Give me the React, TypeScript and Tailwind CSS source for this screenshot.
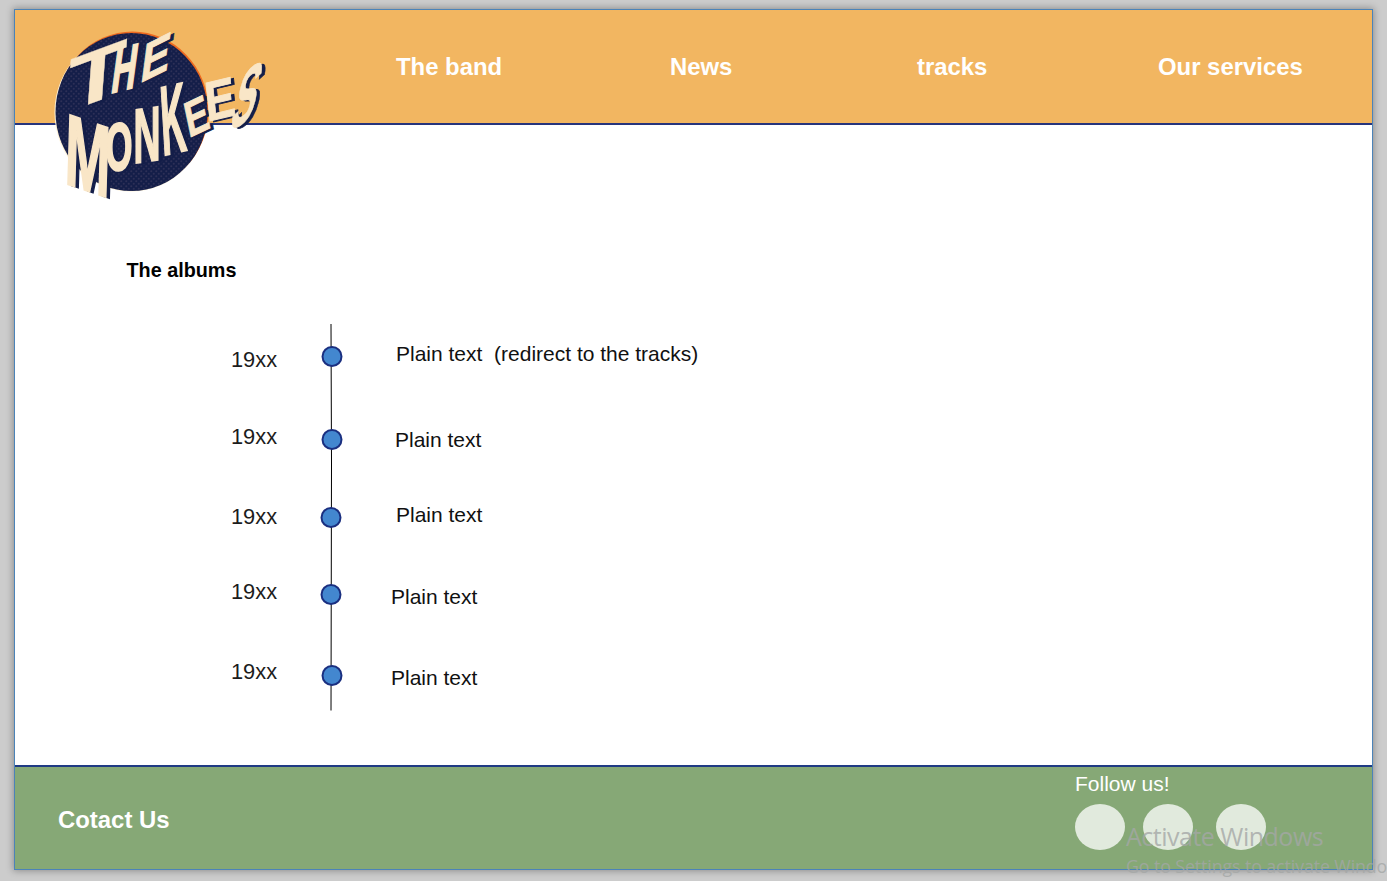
type Point = [number, number];

interface LogoLetter {
  char: string;
  ink: [number, number];
  bl: Point;
  br: Point;
  tl: Point;
  weight: number;
}

// Ink extents are measured at a font size of 100 with a cap height of 68.8.
const LETTERS: LogoLetter[] = [
  { char: 'T', ink: [2.1, 59], bl: [68, 112], br: [122, 92], tl: [72, 59], weight: 0.4 },
  { char: 'H', ink: [6.7, 65.5], bl: [112, 93], br: [132, 88], tl: [118, 49], weight: 1.6 },
  { char: 'E', ink: [6.7, 62.7], bl: [142, 82], br: [166, 70], tl: [147, 44], weight: 1 },
  { char: 'M', ink: [6.7, 76.6], bl: [68, 184], br: [106, 197], tl: [70, 115], weight: 1.8 },
  { char: 'O', ink: [4.1, 73.6], bl: [107, 171], br: [131, 169], tl: [107, 125], weight: 2 },
  { char: 'N', ink: [6.7, 65.5], bl: [136, 163], br: [158, 160], tl: [136, 110], weight: 1.6 },
  { char: 'K', ink: [6.7, 71], bl: [165, 155], br: [187, 150], tl: [161, 88], weight: 1.8 },
  { char: 'E', ink: [6.7, 62.7], bl: [191, 137], br: [210, 128], tl: [184, 104], weight: 0.8 },
  { char: 'E', ink: [6.7, 62.7], bl: [210, 121], br: [235, 115], tl: [206, 83], weight: 0.8 },
  { char: 'S', ink: [3, 62.6], bl: [229, 132], br: [251, 118], tl: [243, 73], weight: 0.8 },
];

function place({ ink, bl, br, tl }: LogoLetter) {
  const w = ink[1] - ink[0];
  const a = (br[0] - bl[0]) / w;
  const b = (br[1] - bl[1]) / w;
  const c = (bl[0] - tl[0]) / 68.8;
  const d = (bl[1] - tl[1]) / 68.8;
  return `matrix(${a} ${b} ${c} ${d} ${bl[0] - a * ink[0]} ${bl[1] - b * ink[0]})`;
}

function Lettering({ color }: { color: string }) {
  return (
    <g
      fill={color}
      stroke={color}
      fontFamily="'Liberation Sans', Arial, sans-serif"
      fontWeight="700"
      fontSize="100"
    >
      {LETTERS.map((letter, i) => (
        <text
          key={i}
          transform={place(letter)}
          strokeWidth={letter.weight}
          vectorEffect="non-scaling-stroke"
        >
          {letter.char}
        </text>
      ))}
    </g>
  );
}

function Logo() {
  return (
    <svg
      className="absolute left-[35px] top-[10px] overflow-visible"
      width="225"
      height="190"
      viewBox="50 20 225 190"
      role="img"
      aria-label="The Monkees"
    >
      <defs>
        <pattern id="halftone" width="5" height="5" patternUnits="userSpaceOnUse">
          <rect width="5" height="5" fill="#141e49" />
          <circle cx="1.25" cy="1.25" r="1" fill="#2d3057" />
          <circle cx="3.75" cy="3.75" r="1" fill="#2d3057" />
        </pattern>
      </defs>
      <ellipse cx="131" cy="112.5" rx="76.5" ry="79" fill="#fff3d8" />
      <ellipse cx="132.5" cy="110.5" rx="76" ry="79" fill="#ed691f" />
      <ellipse cx="131.5" cy="112" rx="76" ry="79" fill="url(#halftone)" />
      <g transform="translate(3.5 1)">
        <Lettering color="#141e49" />
      </g>
      <Lettering color="#f9e6c7" />
    </svg>
  );
}

const YEARS = ['mt-0', 'mt-[53px]', 'mt-[56px]', 'mt-[51px]', 'mt-[56px]'];

const ALBUMS = [
  { text: 'Plain text  (redirect to the tracks)', space: 'ml-[5px]' },
  { text: 'Plain text', space: 'mt-[62px] ml-1' },
  { text: 'Plain text', space: 'mt-[51px] ml-[5px]' },
  { text: 'Plain text', space: 'mt-[58px]' },
  { text: 'Plain text', space: 'mt-[57px]' },
];

const DOTS: Point[] = [
  [12, 32.5],
  [12, 115.5],
  [11, 193.5],
  [11, 270.5],
  [12, 351.5],
];

function Timeline() {
  return (
    <div className="flex items-start">
      <ul className="ml-[216px] w-[89px] pt-6 text-[21.8px] leading-6 text-[#1c1c1c]">
        {YEARS.map((space, i) => (
          <li key={i} className={space}>19xx</li>
        ))}
      </ul>
      <svg width="24" height="387" viewBox="0 0 24 387" className="shrink-0">
        <path d="M11 0 11.5 140 11 386.5" fill="none" stroke="#000" strokeWidth="1" />
        {DOTS.map(([x, y]) => (
          <circle key={y} cx={x} cy={y} r="9.5" fill="#4387cf" stroke="#1a2f80" strokeWidth="2" />
        ))}
      </svg>
      <ul className="ml-[47px] whitespace-pre pt-[18px] text-[21px] leading-6 text-[#111]">
        {ALBUMS.map(({ text, space }, i) => (
          <li key={i} className={space}>{text}</li>
        ))}
      </ul>
    </div>
  );
}

export default function App() {
  return (
    <div className="relative h-[881px] w-[1387px] overflow-hidden bg-[#cccccc] pl-3.5 pt-[9px] font-['Liberation_Sans',Arial,sans-serif]">
      <div className="relative flex h-[861px] w-[1359px] flex-col border border-[#4b83b8] bg-white shadow-[0_0_7px_1px_rgba(0,0,0,0.3)]">
        <header className="h-[115px] shrink-0 bg-[#f2b661]">
          <nav className="flex h-full border-b-2 border-[#27347c] pl-[381px] pt-[43px] text-[23.9px] font-bold leading-7 text-white">
            <a className="w-[274px]">The band</a>
            <a className="w-[247px]">News</a>
            <a className="w-[241px]">tracks</a>
            <a>Our services</a>
          </nav>
        </header>
        <Logo />
        <main className="flex-1">
          <h1 className="mb-[42px] ml-[111.5px] mt-[133px] text-[19.8px] font-bold leading-6 text-black">The albums</h1>
          <Timeline />
        </main>
        <footer className="flex h-[104px] shrink-0 border-t-2 border-[#1f3a84] bg-[#86a876] text-white">
          <div className="w-[1060px] pl-[43px] pt-[39px] text-[23.9px] font-bold leading-7">Cotact Us</div>
          <div className="pt-[5px]">
            <div className="text-[21px] leading-6">Follow us!</div>
            <div className="mt-[7.5px] flex">
              <span className="h-[46px] w-[50px] rounded-[50%] bg-[#e1eadd]" />
              <span className="ml-[18px] h-[46px] w-[50px] rounded-[50%] bg-[#e1eadd]" />
              <span className="ml-[23px] h-[46px] w-[50px] rounded-[50%] bg-[#e1eadd]" />
            </div>
          </div>
        </footer>
      </div>
      <div className="absolute left-[1126px] top-[819px] whitespace-nowrap font-['Open_Sans','Noto_Sans',sans-serif] text-[#a4a7a6]/80">
        <div className="text-[25px] leading-[34px] tracking-[-0.5px]">Activate Windows</div>
        <div className="text-[17.8px] leading-[26px] tracking-[-0.1px]">Go to Settings to activate Windows.</div>
      </div>
    </div>
  );
}
